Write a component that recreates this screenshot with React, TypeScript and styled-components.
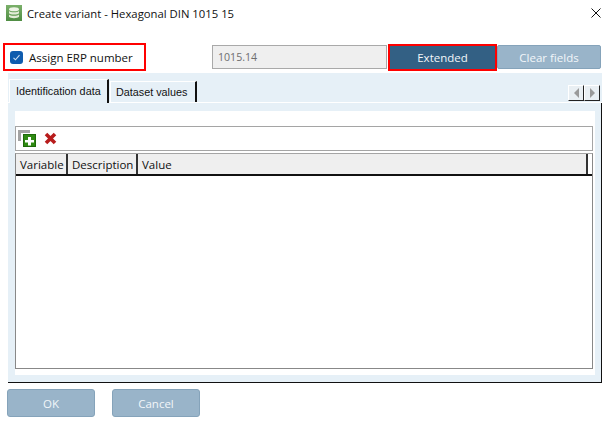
import React from "react";
import styled, { createGlobalStyle } from "styled-components";

const Global = createGlobalStyle`
  html, body { margin: 0; padding: 0; background: #fff; }
  * { box-sizing: border-box; }
`;
const Page = styled.div`
  width: 609px; height: 426px; background: #fff; overflow: hidden;
  display: flex; flex-direction: column;
  font-family: "Open Sans", "Noto Sans", sans-serif; font-size: 11.5px; color: #111;
`;
const TitleBar = styled.div`
  height: 41px; padding: 5px 0 0 6px; display: flex; align-items: flex-start; gap: 5px; position: relative;
`;
const TitleText = styled.span`line-height: 15px; font-size: 11.3px; margin-top: 1px;`;
const CloseBtn = styled.svg`position: absolute; right: 8px; top: 8px;`;
const TopRow = styled.div`
  height: 32px; display: flex; align-items: center; padding-left: 3px;
`;
const Highlight = styled.div`
  width: 143px; height: 28px; border: 2px solid #f00; display: flex; align-items: center; gap: 6px; padding-left: 5px;
`;
const Check = styled.div`
  width: 13px; height: 13px; border-radius: 3px; background: #0f5cae; display: flex; align-items: center; justify-content: center;
`;
const NumberInput = styled.div`
  width: 175px; height: 24px; margin-left: 66px; border: 1px solid #a9a9a9; background: #efefef; color: #6d6d6d;
  display: flex; align-items: center; padding-left: 5px; font-size: 10.6px;
`;
const ActionButton = styled.div<{ $active?: boolean; $w: number }>`
  width: ${p => p.$w}px; height: ${p => (p.$active ? 27 : 24)}px;
  background: ${p => (p.$active ? "#336084" : "#99b4c9")};
  border: ${p => (p.$active ? "2px solid #f00" : "1px solid #85a3ba")};
  border-radius: ${p => (p.$active ? 0 : 2)}px;
  margin-left: ${p => (p.$active ? 1 : 0)}px;
  color: #f2f6f9; display: flex; align-items: center; justify-content: center;
`;
const Panel = styled.div`
  margin: 0 0 0 8px; width: 594px; height: 310px; background: #e6f0f7; position: relative;
  border-bottom: 1px solid #111; display: flex; flex-direction: column;
`;
const TabStrip = styled.div`
  height: 30px; display: flex; align-items: flex-end; padding-left: 1px; border-bottom: 1px solid #fff; position: relative;
`;
const Tab = styled.div<{ $active?: boolean; $w: number }>`
  width: ${p => p.$w}px; height: ${p => (p.$active ? 24 : 21)}px; background: #e6f0f7;
  border-top: 1px solid #fff; border-left: 1px solid #fff; border-right: 2px solid #111;
  margin-right: 1px; font-family: "Liberation Sans", Arial, sans-serif; font-size: 10.8px;
  display: flex; align-items: center;
  padding: 0 0 ${p => (p.$active ? 2 : 0)}px ${p => (p.$active ? 6 : 5)}px;
  position: relative; top: ${p => (p.$active ? 1 : 0)}px; z-index: 1; white-space: nowrap;
`;
const Scrollers = styled.div`position: absolute; right: 2px; top: 12px; display: flex;`;
const Scroller = styled.div`
  width: 16px; height: 16px; background: #e9eff3; border-top: 1px solid #fff; border-left: 1px solid #fff;
  border-right: 1px solid #222; border-bottom: 1px solid #222; display: flex; align-items: center; justify-content: center;
`;
const PanelBody = styled.div`
  flex: 1; border-right: 1px solid #111; padding: 8px 6px 7px 7px; display: flex;
`;
const Sheet = styled.div`
  flex: 1; background: #fff; padding: 15px 2px 6px 0; display: flex; flex-direction: column; gap: 2px;
`;
const Toolbar = styled.div`
  height: 25px; border: 1px solid #a5a5a5; display: flex; align-items: center; padding-left: 2px; gap: 8px;
`;
const Grid = styled.div`
  flex: 1; border: 1px solid #888; border-top-color: #a5a5a5; display: flex; flex-direction: column;
`;
const HeaderRow = styled.div`
  height: 22px; display: flex; border-bottom: 2px solid #111;
`;
const HeaderCell = styled.div<{ $w?: number }>`
  ${p => (p.$w ? `width: ${p.$w}px;` : "flex: 1;")}
  background: #efefef; border-right: 2px solid #333; padding-left: 4px; display: flex; align-items: center;
`;
const HeaderEnd = styled.div`width: 4px; background: #fff;`;
const Footer = styled.div`
  display: flex; gap: 17px; padding: 6px 0 0 7px;
`;
const FooterButton = styled.div`
  width: 88px; height: 28px; background: #99b4c9; border: 1px solid #85a3ba; border-radius: 3px; color: #f2f6f9;
  display: flex; align-items: center; justify-content: center; font-size: 11.5px;
`;

export default function App() {
  return (
    <Page>
      <Global />
      <TitleBar>
        <svg width="16" height="16" viewBox="0 0 16 16">
          <defs>
            <linearGradient id="titleIcon" x1="0" y1="0" x2="0" y2="1">
              <stop offset="0" stopColor="#7bb06a" />
              <stop offset="1" stopColor="#4f8d43" />
            </linearGradient>
          </defs>
          <rect width="16" height="16" fill="url(#titleIcon)" />
          <ellipse cx="8" cy="4.2" rx="5" ry="2" fill="#eef3e6" />
          <path d="M3 6c1 1.7 9 1.7 10 0v2.2c-1 1.7-9 1.7-10 0zM3 9.4c1 1.7 9 1.7 10 0v2.4c-1 1.9-9 1.9-10 0z" fill="#e4ecd8" />
        </svg>
        <TitleText>Create variant - Hexagonal DIN 1015 15</TitleText>
        <CloseBtn width="10" height="10" viewBox="0 0 10 10">
          <path d="M.5.5l9 9M9.5.5l-9 9" stroke="#111" strokeWidth="1" />
        </CloseBtn>
      </TitleBar>
      <TopRow>
        <Highlight>
          <Check>
            <svg width="9" height="9" viewBox="0 0 9 9"><path d="M1.5 4.8l2 2 4-4.6" stroke="#cfe0f2" strokeWidth="1.1" fill="none" /></svg>
          </Check>
          <span>Assign ERP number</span>
        </Highlight>
        <NumberInput>1015.14</NumberInput>
        <ActionButton $active $w={109}>Extended</ActionButton>
        <ActionButton $w={104}>Clear fields</ActionButton>
      </TopRow>
      <Panel>
        <TabStrip>
          <Tab $active $w={100}>Identification data</Tab>
          <Tab $w={87}>Dataset values</Tab>
          <Scrollers>
            <Scroller><svg width="7" height="10" viewBox="0 0 7 10"><path d="M6 0v10L1 5z" fill="#9a9a9a" /></svg></Scroller>
            <Scroller><svg width="7" height="10" viewBox="0 0 7 10"><path d="M1 0v10l5-5z" fill="#9a9a9a" /></svg></Scroller>
          </Scrollers>
        </TabStrip>
        <PanelBody>
          <Sheet>
            <Toolbar>
              <svg width="18" height="17" viewBox="0 0 18 17">
                <path d="M0 0h12v3H3v8H0z" fill="#a3a3a3" />
                <rect x="5" y="4" width="13" height="13" fill="#2f8a12" />
                <rect x="5.5" y="4.5" width="12" height="12" fill="none" stroke="#1f6a0a" />
                <path d="M10 7h3v3h3v2.500h-3v3h-3v-3H7V10h3z" fill="#fff" />
              </svg>
              <svg width="13" height="13" viewBox="0 0 13 13">
                <path d="M2 2l9 9M11 2l-9 9" stroke="#b81c1c" strokeWidth="3.6" />
              </svg>
            </Toolbar>
            <Grid>
              <HeaderRow>
                <HeaderCell $w={52}>Variable</HeaderCell>
                <HeaderCell $w={70}>Description</HeaderCell>
                <HeaderCell>Value</HeaderCell>
                <HeaderEnd />
              </HeaderRow>
            </Grid>
          </Sheet>
        </PanelBody>
      </Panel>
      <Footer>
        <FooterButton>OK</FooterButton>
        <FooterButton>Cancel</FooterButton>
      </Footer>
    </Page>
  );
}
